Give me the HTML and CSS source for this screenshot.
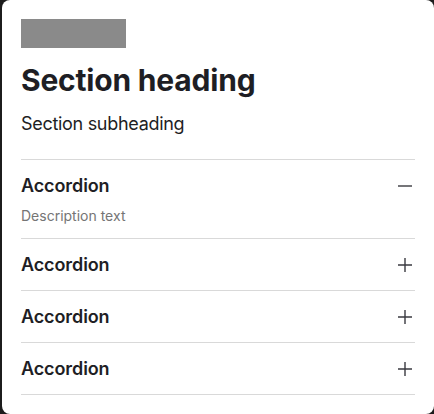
FILE: index.html
```html
<!DOCTYPE html>
<html lang="en">
<head>
    <meta charset="UTF-8">
    <meta name="viewport" content="width=device-width, initial-scale=1.0">
    <title>Accordion Section</title>
    <link rel="stylesheet" href="styles.css">
</head>
<body>
    <section class="card">
        <div class="placeholder"></div>
        <h1>Section heading</h1>
        <p class="subheading">Section subheading</p>

        <div class="accordion">
            <div class="item open">
                <div class="item-head">
                    <span>Accordion</span>
                    <svg class="icon" viewBox="0 0 16 16"><path d="M1 8h14"/></svg>
                </div>
                <p class="desc">Description text</p>
            </div>
            <div class="item">
                <div class="item-head">
                    <span>Accordion</span>
                    <svg class="icon" viewBox="0 0 16 16"><path d="M1 8h14M8 1v14"/></svg>
                </div>
            </div>
            <div class="item">
                <div class="item-head">
                    <span>Accordion</span>
                    <svg class="icon" viewBox="0 0 16 16"><path d="M1 8h14M8 1v14"/></svg>
                </div>
            </div>
            <div class="item">
                <div class="item-head">
                    <span>Accordion</span>
                    <svg class="icon" viewBox="0 0 16 16"><path d="M1 8h14M8 1v14"/></svg>
                </div>
            </div>
        </div>
    </section>
</body>
</html>
```

FILE: styles.css
```css
:root {
    --text: #1e1e24;
    --muted: #757575;
    --line: #d9d9d9;
}

* {
    box-sizing: border-box;
    font-family: Inter, "Noto Sans", sans-serif;
}

body {
    margin: 0;
    background: #1c1c1c;
    color: var(--text);
}

/* Card */
.card {
    margin-left: 2px;
    height: 414px;
    background: #ffffff;
    border-radius: 8px;
    padding: 19px 19px 0 19px;
}

.placeholder {
    width: 105px;
    height: 29px;
    background: #8a8a8a;
}

h1 {
    margin: 14px 0 0;
    font-size: 30px;
    font-weight: 700;
    line-height: 36px;
    letter-spacing: -0.2px;
}

.subheading {
    margin: 14px 0 0;
    font-size: 18px;
    line-height: 24px;
    letter-spacing: -0.3px;
}

/* Accordion */
.accordion {
    margin-top: 23px;
    border-bottom: 1px solid var(--line);
}

.item {
    border-top: 1px solid var(--line);
    padding: 14px 0 13px;
}

.item.open {
    padding-bottom: 12px;
}

.item-head {
    display: flex;
    justify-content: space-between;
    align-items: center;
    font-size: 18px;
    font-weight: 600;
    line-height: 24px;
    letter-spacing: -0.1px;
}

.icon {
    width: 16px;
    height: 16px;
    margin-right: 2px;
    fill: none;
    stroke: #3a3a40;
    stroke-width: 1.4;
}

.desc {
    margin: 8px 0 0;
    font-size: 14px;
    line-height: 20px;
    color: var(--muted);
}
```
